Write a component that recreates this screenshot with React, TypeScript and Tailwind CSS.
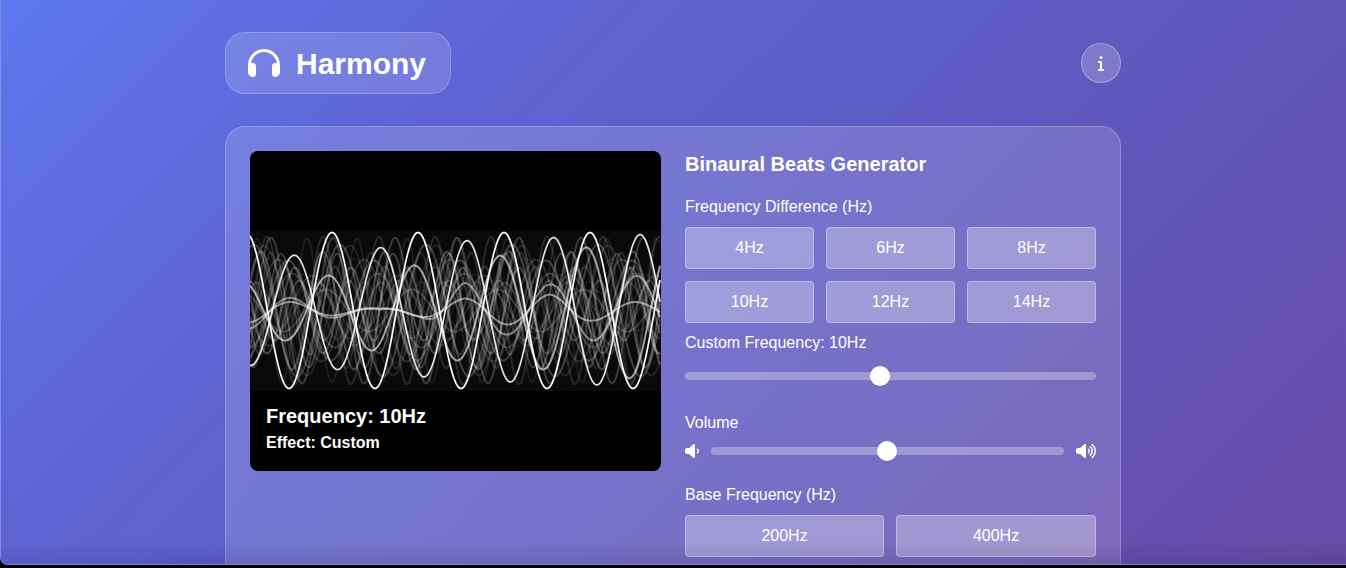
import { FaHeadphones, FaInfo, FaVolumeLow, FaVolumeHigh } from "react-icons/fa6";

const H = 160;
const MID = 79.5;

type Wave = {
	period: number;
	peak: number;
	env: [number, number][];
	color: string;
	width: number;
};

// amplitude at x, read off piecewise
const ampAt = (env: [number, number][], x: number) => {
	if (x <= env[0][0]) return env[0][1];
	for (let i = 1; i < env.length; i++) {
		if (x <= env[i][0]) {
			const [x0, a0] = env[i - 1];
			const [x1, a1] = env[i];
			return a0 + ((a1 - a0) * (x - x0)) / (x1 - x0);
		}
	}
	return env[env.length - 1][1];
};

const wavePath = (w: Wave) => {
	let d = "";
	for (let x = 0; x <= 411; x += 2) {
		const y = MID - ampAt(w.env, x) * Math.cos((2 * Math.PI * (x - w.peak)) / w.period);
		d += `${x === 0 ? "M" : "L"}${x} ${y.toFixed(1)}`;
	}
	return d;
};

// faint history of the trace
const ghosts: Wave[] = [];
for (let i = 0; i < 22; i++) {
	const amp = 20 + ((i * 37) % 59);
	ghosts.push({
		period: i % 2 === 0 ? 86 : 50 + (i % 3) * 6,
		peak: (i * 31) % 86,
		env: [[0, amp]],
		color: `rgba(255,255,255,${(0.06 + ((i * 7) % 10) * 0.02).toFixed(3)})`,
		width: 2,
	});
}

const waves: Wave[] = [
	{ period: 86, peak: 82, env: [[0, 78]], color: "#ffffff", width: 1.7 },
	{ period: 86.5, peak: 44, env: [[40, 55], [130, 63], [217, 70], [303, 73], [390, 76]], color: "rgba(255,255,255,0.88)", width: 1.7 },
	{ period: 86, peak: 78, env: [[35, 30], [120, 40], [250, 55], [335, 63], [400, 70]], color: "rgba(255,255,255,0.6)", width: 2 },
	{ period: 86, peak: 42, env: [[0, 18], [77, 8], [130, 2], [170, 6], [215, 28], [258, 24], [300, 26], [343, 30], [400, 36]], color: "rgba(255,255,255,0.45)", width: 2 },
	{ period: 86, peak: 42, env: [[0, 12], [130, 1], [215, 12], [300, 16], [343, 10], [400, 8]], color: "rgba(255,255,255,0.5)", width: 2 },
];

const Visualizer = () => (
	<div className="relative flex h-[320px] items-center overflow-hidden rounded-lg bg-black">
		<svg width="411" height={H} viewBox={`0 0 411 ${H}`} className="shrink-0">
			<rect width="411" height={H} fill="#0a0a0a" />
			{ghosts.concat(waves).map((w, i) => (
				<path key={i} d={wavePath(w)} fill="none" stroke={w.color} strokeWidth={w.width} />
			))}
		</svg>
		<div className="absolute bottom-4 left-4 text-white">
			<div className="text-[20px] leading-[30px] font-bold">Frequency: 10Hz</div>
			<div className="text-[16px] leading-[24px] font-bold">Effect: Custom</div>
		</div>
	</div>
);

const Preset = ({ label }: { label: string }) => (
	<button className="h-[42px] rounded border border-white/30 bg-white/30 text-[16px] text-white">
		{label}
	</button>
);

const Label = ({ children }: { children: string }) => (
	<div className="text-[16px] leading-[22px] text-white">{children}</div>
);

const Slider = ({ pos }: { pos: string }) => (
	<div className="relative h-2 flex-1 rounded bg-white/30">
		<div className={`absolute top-[-6px] h-5 w-5 rounded-full bg-white ${pos}`} />
	</div>
);

export default function App() {
	return (
		<div className="h-[568px] overflow-hidden bg-black font-['Liberation_Sans',Arial,sans-serif]">
			<div className="relative h-[565px] overflow-hidden rounded-bl-lg bg-[linear-gradient(135deg,#5c79ee,#5e64d4_28%,#6055b9_70%,#684ca8)]">
				<div className="mx-auto flex w-[896px] flex-col">
					<div className="flex items-center justify-between pt-8">
						<div className="flex h-[62px] w-[226px] items-center gap-4 rounded-[20px] border border-white/20 bg-white/15 pl-[22px] text-white">
							<FaHeadphones className="h-8 w-8" />
							<span className="text-[30px] font-bold">Harmony</span>
						</div>
						<div className="flex h-10 w-10 items-center justify-center rounded-full border border-white/30 bg-white/20 text-white">
							<FaInfo className="h-4 w-4" />
						</div>
					</div>
					<div className="mt-8 grid h-[600px] grid-cols-2 content-start gap-6 rounded-[20px] border border-white/20 bg-white/15 p-6">
						<Visualizer />
						<div className="flex flex-col">
							<h2 className="text-[20px] leading-[26px] font-bold text-white">Binaural Beats Generator</h2>
							<div className="mt-[19px]"><Label>Frequency Difference (Hz)</Label></div>
							<div className="mt-[9px] grid grid-cols-3 gap-3">
								{["4Hz", "6Hz", "8Hz", "10Hz", "12Hz", "14Hz"].map((f) => (
									<Preset key={f} label={f} />
								))}
							</div>
							<div className="mt-[9px]"><Label>Custom Frequency: 10Hz</Label></div>
							<div className="mt-[18px] flex h-2"><Slider pos="left-[185px]" /></div>
							<div className="mt-8"><Label>Volume</Label></div>
							<div className="mt-[7px] flex h-5 items-center gap-3 text-white">
								<FaVolumeLow className="h-4 w-[14px]" />
								<Slider pos="left-[166px]" />
								<FaVolumeHigh className="h-5 w-5" />
							</div>
							<div className="mt-[23px]"><Label>Base Frequency (Hz)</Label></div>
							<div className="mt-[9px] grid grid-cols-[199px_200px] gap-3">
								<Preset label="200Hz" />
								<Preset label="400Hz" />
							</div>
						</div>
					</div>
				</div>
				<div className="pointer-events-none absolute inset-0 rounded-bl-lg shadow-[inset_1px_0_0_#8b8be6,inset_0_-1px_0_#8b8be6]" />
				<div className="pointer-events-none absolute inset-x-0 bottom-0 h-6 bg-gradient-to-b from-transparent to-black/10" />
			</div>
		</div>
	);
}
